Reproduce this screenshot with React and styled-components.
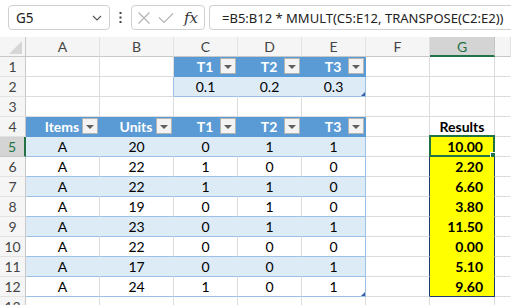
import React from 'react';
import styled, { createGlobalStyle } from 'styled-components';

const GRID = '#dcdcdc';
const BLUE = '#5b9bd5';
const BAND = '#ddebf7';
const LINE = '#9bc2e6';
const YEL = '#ffff00';
const YB = '#203b70';
const GREEN = '#217346';

const GlobalStyle = createGlobalStyle`
  html, body { margin: 0; padding: 0; background: #fff; overflow: hidden; }
  body { font-family: Lato, "Liberation Sans", sans-serif; }
`;

const Page = styled.div`
  width: 511px;
  height: 305px;
  overflow: hidden;
  background: #fff;
`;

const Toolbar = styled.div`
  height: 37px;
  box-sizing: border-box;
  display: flex;
  align-items: flex-start;
  padding: 5px 0 0 8px;
  background: #fff;
  font-family: "Noto Sans", "Open Sans", sans-serif;
`;

const NameBox = styled.div`
  width: 102px;
  height: 25px;
  box-sizing: border-box;
  border: 1px solid #d1d1d1;
  border-radius: 4px;
  display: flex;
  align-items: center;
  justify-content: space-between;
  padding: 0 7px 0 7px;
  font-size: 13.5px;
  color: #222;
`;

const Dots = styled.div`
  width: 21px;
  height: 25px;
  display: flex;
  align-items: center;
  justify-content: center;
`;

const FxBox = styled.div`
  width: 74px;
  height: 25px;
  box-sizing: border-box;
  border: 1px solid #d1d1d1;
  border-radius: 4px;
  display: flex;
  align-items: center;
  padding-left: 5px;
  gap: 7px;
`;

const Fx = styled.span`
  font-family: "DejaVu Serif", "Liberation Serif", serif;
  font-style: italic;
  font-size: 15px;
  color: #333;
  margin-left: 3px;
`;

const Formula = styled.div`
  flex: 1;
  margin-left: 4px;
  height: 25px;
  box-sizing: border-box;
  border: 1px solid #d1d1d1;
  border-right: none;
  border-radius: 4px 0 0 4px;
  display: flex;
  align-items: center;
  padding-left: 12px;
  font-size: 13px;
  color: #222;
  white-space: nowrap;
`;

const Sheet = styled.div`
  display: grid;
  grid-template-columns: 26px 74px 74px 64px 64px 64px 64px 65px 1fr;
  grid-auto-rows: 20px;
`;

const ColHead = styled.div`
  box-sizing: border-box;
  display: flex;
  align-items: center;
  justify-content: center;
  background: ${p => (p.$sel ? '#d4d4d4' : '#f5f5f5')};
  border-right: 1px solid ${p => (p.$sel ? '#c4c4c4' : '#e2e2e2')};
  border-bottom: ${p => (p.$sel ? `2px solid ${GREEN}` : '1px solid #c8c8c8')};
  color: ${p => (p.$sel ? GREEN : '#444')};
  font-size: 14px;
`;

const Corner = styled.div`
  box-sizing: border-box;
  background: #f5f5f5;
  border-right: 1px solid #c8c8c8;
  border-bottom: 1px solid #c8c8c8;
  display: flex;
  align-items: flex-end;
  justify-content: flex-end;
  padding: 0 3px 2px 0;
`;

const RowHead = styled.div`
  box-sizing: border-box;
  display: flex;
  align-items: center;
  justify-content: center;
  background: ${p => (p.$sel ? '#d4d4d4' : '#f5f5f5')};
  border-right: ${p => (p.$sel ? `2px solid ${GREEN}` : '1px solid #c8c8c8')};
  border-bottom: 1px solid ${p => (p.$sel ? '#c4c4c4' : '#e2e2e2')};
  color: ${p => (p.$sel ? GREEN : '#444')};
  font-size: 14px;
  padding-bottom: 1px;
`;

const Cell = styled.div`
  box-sizing: border-box;
  position: relative;
  display: flex;
  align-items: center;
  justify-content: ${p => (p.$align === 'right' ? 'flex-end' : 'center')};
  padding: ${p => (p.$align === 'right' ? '0 11px 1px 0' : '0 0 1px 0')};
  background: ${p => p.$bg || '#fff'};
  border-right: 1px solid ${p => p.$rb || GRID};
  border-bottom: 1px solid ${p => p.$bb || GRID};
  color: ${p => p.$color || '#000'};
  font-weight: ${p => (p.$bold ? 700 : 400)};
  font-size: 14px;
  white-space: nowrap;
  &::after {
    content: '';
    display: ${p => (p.$handle ? 'block' : 'none')};
    position: absolute;
    right: 0;
    bottom: 0;
    width: 0;
    height: 0;
    border-left: 4px solid transparent;
    border-bottom: 4px solid #3a5fa8;
  }
`;

const HeadCell = styled(Cell)`
  display: grid;
  grid-template-areas: 'stack';
  align-items: center;
  justify-content: stretch;
  padding: 0 1px 1px 0;
  & > * { grid-area: stack; }
`;

const HeadText = styled.span`
  justify-self: center;
  color: #fff;
  font-weight: 700;
`;

const FilterBtn = styled.span`
  justify-self: end;
  width: 16px;
  height: 16px;
  box-sizing: border-box;
  background: #f3f3f3;
  border: 1px solid #b4b4b4;
  display: flex;
  align-items: center;
  justify-content: center;
  &::before {
    content: '';
    width: 0;
    height: 0;
    border-left: 4px solid transparent;
    border-right: 4px solid transparent;
    border-top: 4px solid #5f5f5f;
    margin-top: 1px;
  }
`;

const Selection = styled.span`
  position: absolute;
  left: -1px;
  top: -2px;
  right: -1px;
  bottom: -1px;
  border: 2px solid ${GREEN};
  pointer-events: none;
`;

const FillHandle = styled.span`
  position: absolute;
  right: -4px;
  bottom: -4px;
  width: 5px;
  height: 5px;
  background: ${GREEN};
  border: 1px solid #fff;
`;

const cols = ['A', 'B', 'C', 'D', 'E', 'F', 'G', ''];

const data = [
  ['A', 20, 0, 1, 1, '10.00'],
  ['A', 22, 1, 0, 0, '2.20'],
  ['A', 22, 1, 1, 0, '6.60'],
  ['A', 19, 0, 1, 0, '3.80'],
  ['A', 23, 0, 1, 1, '11.50'],
  ['A', 22, 0, 0, 0, '0.00'],
  ['A', 17, 0, 0, 1, '5.10'],
  ['A', 24, 1, 0, 1, '9.60'],
];

function Head({ text }) {
  return (
    <HeadCell $bg={BLUE} $rb={BLUE} $bb={BLUE}>
      <HeadText>{text}</HeadText>
      <FilterBtn />
    </HeadCell>
  );
}

function Chevron() {
  return (
    <svg width="10" height="6" viewBox="0 0 10 6">
      <path d="M1 1l4 4 4-4" fill="none" stroke="#555" strokeWidth="1.1" />
    </svg>
  );
}

export default function App() {
  const rows = [];

  rows.push(
    <RowHead key="r1">1</RowHead>,
    <Cell key="1a" />,
    <Cell key="1b" />,
    <Head key="1c" text="T1" />,
    <Head key="1d" text="T2" />,
    <Head key="1e" text="T3" />,
    <Cell key="1f" />,
    <Cell key="1g" />,
    <Cell key="1h" $rb="transparent" />
  );
  rows.push(
    <RowHead key="r2">2</RowHead>,
    <Cell key="2a" />,
    <Cell key="2b" $rb={LINE} />,
    <Cell key="2c" $bg={BAND} $rb={BAND} $bb={LINE}>0.1</Cell>,
    <Cell key="2d" $bg={BAND} $rb={BAND} $bb={LINE}>0.2</Cell>,
    <Cell key="2e" $bg={BAND} $rb={LINE} $bb={LINE} $handle>0.3</Cell>,
    <Cell key="2f" />,
    <Cell key="2g" />,
    <Cell key="2h" $rb="transparent" />
  );
  rows.push(<RowHead key="r3">3</RowHead>);
  for (let i = 0; i < 8; i++) rows.push(<Cell key={'3' + i} $rb={i === 7 ? 'transparent' : undefined} />);
  rows.push(
    <RowHead key="r4">4</RowHead>,
    <Head key="4a" text="Items" />,
    <Head key="4b" text="Units" />,
    <Head key="4c" text="T1" />,
    <Head key="4d" text="T2" />,
    <Head key="4e" text="T3" />,
    <Cell key="4f" />,
    <Cell key="4g" $bold $bb={YB} $rb={GRID}>Results</Cell>,
    <Cell key="4h" $rb="transparent" />
  );

  data.forEach((d, i) => {
    const r = i + 5;
    const band = i % 2 === 0;
    const bg = band ? BAND : '#fff';
    const inner = band ? BAND : GRID;
    const lastRow = i === data.length - 1;
    rows.push(
      <RowHead key={'r' + r} $sel={r === 5}>{r}</RowHead>,
      <Cell key={r + 'a'} $bg={bg} $rb={inner} $bb={LINE}>{d[0]}</Cell>,
      <Cell key={r + 'b'} $bg={bg} $rb={inner} $bb={LINE}>{d[1]}</Cell>,
      <Cell key={r + 'c'} $bg={bg} $rb={inner} $bb={LINE}>{d[2]}</Cell>,
      <Cell key={r + 'd'} $bg={bg} $rb={inner} $bb={LINE}>{d[3]}</Cell>,
      <Cell key={r + 'e'} $bg={bg} $rb={LINE} $bb={LINE} $handle={lastRow}>{d[4]}</Cell>,
      <Cell key={r + 'f'} $rb={YB} />,
      <Cell key={r + 'g'} $bg={YEL} $rb={YB} $bb={lastRow ? YB : YEL} $bold $align="right">
        {d[5]}
        {r === 5 && (
          <Selection>
            <FillHandle />
          </Selection>
        )}
      </Cell>,
      <Cell key={r + 'h'} $rb="transparent" />
    );
  });

  rows.push(<RowHead key="r13">13</RowHead>);
  for (let i = 0; i < 8; i++) rows.push(<Cell key={'13' + i} $rb={i === 7 ? 'transparent' : undefined} />);

  return (
    <Page>
      <GlobalStyle />
      <Toolbar>
        <NameBox>
          <span>G5</span>
          <Chevron />
        </NameBox>
        <Dots>
          <svg width="3" height="11" viewBox="0 0 3 11">
            <rect x="0.5" y="0" width="2" height="2" fill="#444" />
            <rect x="0.5" y="4.5" width="2" height="2" fill="#444" />
            <rect x="0.5" y="9" width="2" height="2" fill="#444" />
          </svg>
        </Dots>
        <FxBox>
          <svg width="14" height="14" viewBox="0 0 14 14">
            <path d="M1.5 1.5l11 11M12.5 1.5l-11 11" stroke="#b3b3b3" strokeWidth="1.1" fill="none" />
          </svg>
          <svg width="16" height="12" viewBox="0 0 16 12">
            <path d="M1 5.5l5 5L15 1.5" stroke="#b3b3b3" strokeWidth="1.1" fill="none" />
          </svg>
          <Fx>fx</Fx>
        </FxBox>
        <Formula>=B5:B12 * MMULT(C5:E12, TRANSPOSE(C2:E2))</Formula>
      </Toolbar>
      <Sheet>
        <Corner>
          <svg width="13" height="13" viewBox="0 0 13 13">
            <path d="M13 0V13H0Z" fill="#d6d6d6" />
          </svg>
        </Corner>
        {cols.map((c, i) => (
          <ColHead key={'c' + i} $sel={c === 'G'}>{c}</ColHead>
        ))}
        {rows}
      </Sheet>
    </Page>
  );
}
